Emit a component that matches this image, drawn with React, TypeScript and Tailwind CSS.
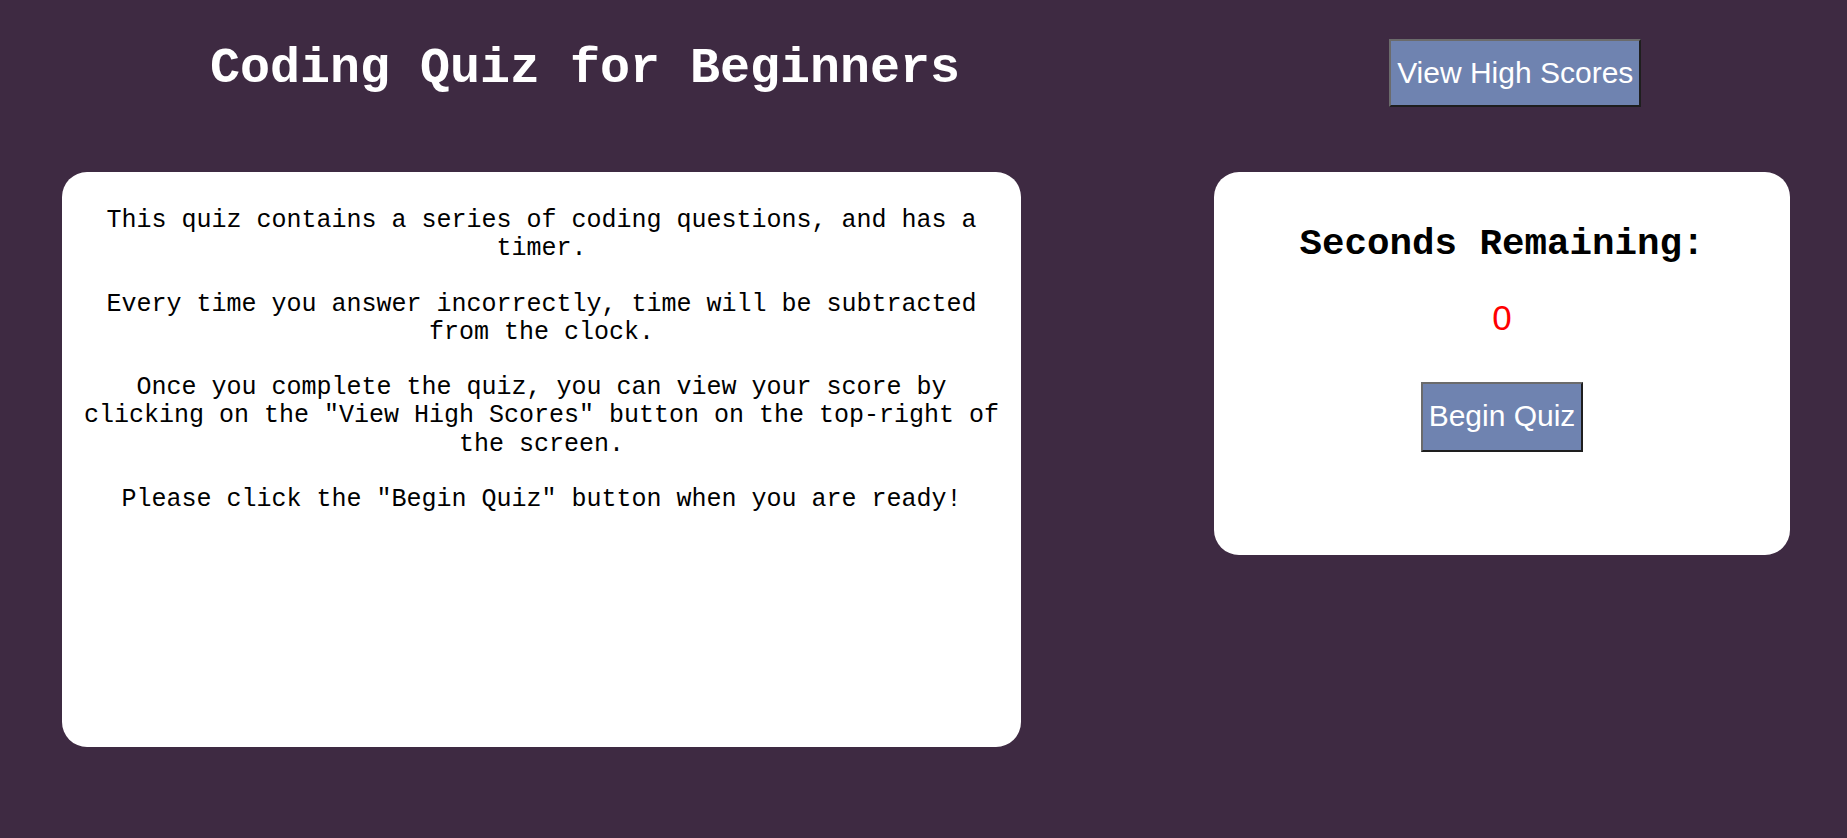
export default function App() {
  return (
    <div className="min-h-[838px] w-full bg-[#3e2a42] font-['Liberation_Mono',monospace]">
      <header className="flex h-[172px] items-start">
        <h1 className="ml-[210px] mt-[41px] whitespace-nowrap text-[50px] font-bold leading-[56.6px] text-white">
          Coding Quiz for Beginners
        </h1>
        <button className="ml-[429px] mt-[39px] h-[68px] border-2 border-b-[#1e1e1e] border-l-[#6b6b6b] border-r-[#1e1e1e] border-t-[#6b6b6b] bg-[#6f83b0] px-[6px] font-['Liberation_Sans',Arial,sans-serif] text-[30px] leading-[34.5px] text-white">
          View High Scores
        </button>
      </header>

      <main className="flex items-start gap-[193px] pl-[62px]">
        <section className="h-[575px] w-[959px] rounded-[25px] bg-white p-[10px] text-center text-[25px] leading-[28.3px] text-black">
          <p className="mt-[25px]">
            This quiz contains a series of coding questions, and has a timer.
          </p>
          <p className="mt-[27px]">
            Every time you answer incorrectly, time will be subtracted from the
            clock.
          </p>
          <p className="mt-[27px]">
            Once you complete the quiz, you can view your score by clicking on
            the "View High Scores" button on the top-right of the screen.
          </p>
          <p className="mt-[27px]">
            Please click the "Begin Quiz" button when you are ready!
          </p>
        </section>

        <section className="flex h-[383px] w-[576px] flex-col items-center rounded-[25px] bg-white pt-[51px] text-center">
          <h2 className="text-[37.5px] font-bold leading-[42.5px] text-black">
            Seconds Remaining:
          </h2>
          <div className="mt-[32px] font-['Liberation_Sans',Arial,sans-serif] text-[35px] leading-[40px] text-[#ff0000]">
            0
          </div>
          <button className="mt-[44px] h-[70px] border-2 border-b-[#1e1e1e] border-l-[#6b6b6b] border-r-[#1e1e1e] border-t-[#6b6b6b] bg-[#6f83b0] px-[6px] font-['Liberation_Sans',Arial,sans-serif] text-[30px] leading-[34.5px] text-white">
            Begin Quiz
          </button>
        </section>
      </main>
    </div>
  );
}
